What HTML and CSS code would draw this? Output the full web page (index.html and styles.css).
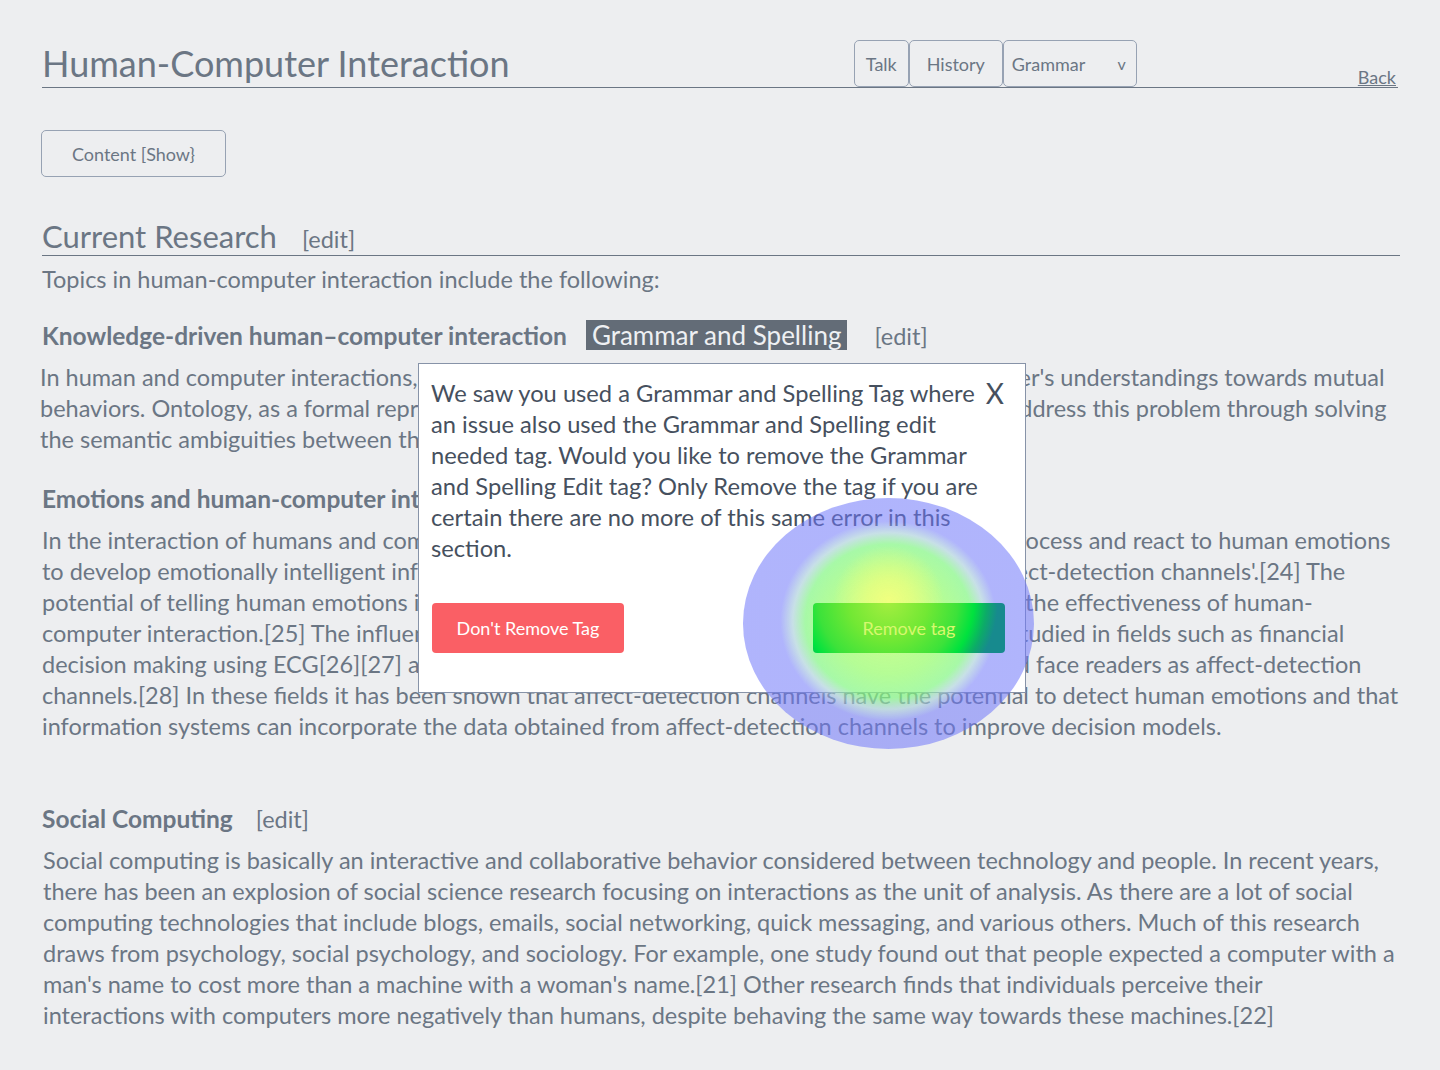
FILE: index.html
```html
<!DOCTYPE html>
<html lang="en">
<head>
<meta charset="utf-8">
<title>Human-Computer Interaction</title>
<link rel="stylesheet" href="styles.css">
</head>
<body>
<div class="page">
  <header class="header">
    <h1 class="title">Human-Computer Interaction</h1>
    <nav class="tabs">
      <span class="tab tab-talk">Talk</span>
      <span class="tab tab-history">History</span>
      <span class="tab tab-select"><span>Grammar</span><span class="caret">v</span></span>
    </nav>
    <a class="back" href="#">Back</a>
  </header>

  <button class="toc-btn">Content [Show}</button>

  <section class="section">
    <h2 class="section-title"><span>Current Research</span><span class="edit edit-h2">[edit]</span></h2>
    <p class="text text-topics">Topics in human-computer interaction include the following:</p>

    <h3 class="sub sub-knowledge"><span>Knowledge-driven human–computer interaction</span><span class="tag">Grammar and Spelling</span><span class="edit edit-tag">[edit]</span></h3>
    <p class="text text-knowledge">In human and computer interactions, a semantic gap usually exists between human and computer's understandings towards mutual behaviors. Ontology, as a formal representation of domain-specific knowledge, can be used to address this problem through solving the semantic ambiguities between the two parties.[20]</p>

    <h3 class="sub sub-emotions"><span>Emotions and human-computer interaction</span></h3>
    <p class="text text-emotions">In the interaction of humans and computers, research has studied how computers can detect, process and react to human emotions to develop emotionally intelligent information systems. Researchers have suggested several 'affect-detection channels'.[24] The potential of telling human emotions in an automated and digital fashion lies in improvements to the effectiveness of human-computer interaction.[25] The influence of emotions in human-computer interaction has been studied in fields such as financial decision making using ECG[26][27] and organisational knowledge sharing using eye tracking and face readers as affect-detection channels.[28] In these fields it has been shown that affect-detection channels have the potential to detect human emotions and that information systems can incorporate the data obtained from affect-detection channels to improve decision models.</p>

    <h3 class="sub sub-social"><span>Social Computing</span><span class="edit edit-social">[edit]</span></h3>
    <p class="text text-social">Social computing is basically an interactive and collaborative behavior considered between technology and people. In recent years, there has been an explosion of social science research focusing on interactions as the unit of analysis. As there are a lot of social computing technologies that include blogs, emails, social networking, quick messaging, and various others. Much of this research draws from psychology, social psychology, and sociology. For example, one study found out that people expected a computer with a man's name to cost more than a machine with a woman's name.[21] Other research finds that individuals perceive their<br>interactions with computers more negatively than humans, despite behaving the same way towards these machines.[22]</p>
  </section>
</div>

<div class="modal">
  <div class="modal-top">
    <p class="modal-text">We saw you used a Grammar and Spelling Tag where an issue also used the Grammar and Spelling edit needed tag. Would you like to remove the Grammar and Spelling Edit tag? Only Remove the tag if you are certain there are no more of this same error in this section.</p>
    <span class="modal-close">X</span>
  </div>
  <div class="modal-actions">
    <button class="btn btn-keep">Don't Remove Tag</button>
    <button class="btn btn-remove">Remove tag</button>
  </div>
</div>

<div class="heat"></div>
</body>
</html>
```

FILE: styles.css
```css
html, body {
  margin: 0;
  padding: 0;
}

body {
  background: #edeef0;
  color: #6b7684;
  font-family: Lato, "Noto Sans", sans-serif;
  width: 1440px;
  height: 1070px;
  overflow: hidden;
  position: relative;
}

.page {
  padding: 40px 40px 0 42px;
}

/* Header */
.header {
  display: flex;
  align-items: flex-end;
  height: 47px;
  border-bottom: 1px solid #6b7684;
  width: 1356px;
}

.title {
  flex: 1;
  margin: 0;
  font-weight: 400;
  font-size: 36px;
  line-height: 36px;
  padding-bottom: 6px;
  color: #6b7684;
}

.tabs {
  display: flex;
  height: 47px;
}

.tab {
  box-sizing: border-box;
  height: 47px;
  border: 1px solid #97a2b3;
  border-radius: 5px;
  display: flex;
  align-items: center;
  font-size: 18px;
  color: #6b7684;
}

.tab-talk {
  width: 55px;
  justify-content: center;
}

.tab-history {
  width: 94px;
  justify-content: center;
}

.tab-select {
  width: 134px;
  padding: 0 10px 0 8px;
  justify-content: space-between;
}

.caret {
  font-size: 16px;
}

.back {
  margin-left: 221px;
  margin-right: 2px;
  font-size: 18px;
  color: #6b7684;
  text-decoration: underline;
  line-height: 18px;
  padding-bottom: 1px;
}

/* TOC button */
.toc-btn {
  margin-top: 42px;
  margin-left: -1px;
  width: 185px;
  height: 47px;
  background: transparent;
  border: 1px solid #97a2b3;
  border-radius: 5px;
  font-family: Lato, "Noto Sans", sans-serif;
  font-size: 18px;
  color: #6b7684;
  display: block;
}

/* Section */
.section-title {
  display: flex;
  align-items: baseline;
  margin: 41px 0 0 0;
  height: 37px;
  font-weight: 400;
  font-size: 31px;
  line-height: 37px;
  border-bottom: 1px solid #6b7684;
  width: 1358px;
  color: #6b7684;
}

.edit {
  font-size: 23.5px;
  font-weight: 400;
  color: #6b7684;
}

.edit-h2 {
  margin-left: 25px;
}

.text {
  margin: 0;
  font-size: 23.5px;
  line-height: 31px;
  width: 1360px;
  color: #6b7684;
}

.text-topics {
  margin-top: 8px;
}

.sub {
  margin: 0;
  height: 31px;
  font-size: 24.5px;
  font-weight: 700;
  line-height: 31px;
  color: #6b7684;
  display: flex;
  align-items: baseline;
}

.sub-knowledge {
  margin-top: 25px;
}

.tag {
  display: inline-block;
  margin-left: 19px;
  background: #636c77;
  color: #eef0f3;
  font-size: 26px;
  font-weight: 400;
  line-height: 30px;
  padding: 0 6px;
}

.edit-tag {
  margin-left: 27px;
}

.text-knowledge {
  margin-top: 11px;
  margin-left: -2px;
}

.sub-emotions {
  margin-top: 28px;
}

.text-emotions {
  margin-top: 11px;
}

.sub-social {
  margin-top: 61px;
}

.edit-social {
  margin-left: 23px;
}

.text-social {
  margin-top: 11px;
  margin-left: 1px;
  width: 1358px;
}

/* Modal */
.modal {
  position: absolute;
  left: 418px;
  top: 363px;
  width: 608px;
  height: 330px;
  box-sizing: border-box;
  background: #ffffff;
  border: 1px solid #8793a8;
  padding: 14px 20px 0 12px;
}

.modal-top {
  display: flex;
  justify-content: space-between;
  align-items: flex-start;
}

.modal-text {
  margin: 0;
  width: 552px;
  font-size: 23.7px;
  line-height: 31px;
  color: #46505e;
}

.modal-close {
  font-size: 28px;
  line-height: 31px;
  color: #46505e;
  margin-right: 1px;
}

.modal-actions {
  display: flex;
  justify-content: space-between;
  margin-top: 39px;
}

.btn {
  width: 192px;
  height: 50px;
  border: none;
  border-radius: 4px;
  font-family: Lato, "Noto Sans", sans-serif;
  font-size: 18px;
  color: #ffffff;
}

.btn-keep {
  background: #fa5f65;
  margin-left: 1px;
}

.btn-remove {
  position: relative;
  z-index: 2;
  background: radial-gradient(circle at 75px -3px, #a6ee40 0, #72e834 40px, #3ce23a 70px, #00e23e 86px, #0cab68 99px, #178a8e 110px);
  color: #d6f86e;
}

/* Heat spot overlay */
.heat {
  position: absolute;
  z-index: 1;
  left: 743px;
  top: 498px;
  width: 291px;
  height: 251px;
  border-radius: 50%;
  pointer-events: none;
  background:
    radial-gradient(circle at 50% 41%,
      rgba(245, 255, 125, 0.9) 0,
      rgba(235, 255, 125, 0.75) 22px,
      rgba(220, 255, 125, 0) 55px),
    radial-gradient(ellipse 104px 96px at 50% 49%,
      rgba(200, 255, 120, 0.85) 0,
      rgba(160, 252, 120, 0.78) 55%,
      rgba(130, 246, 130, 0.7) 80%,
      rgba(165, 205, 215, 0.62) 92%,
      rgba(111, 119, 250, 0.55) 104%,
      rgba(111, 119, 250, 0.55) 200%);
}
```
